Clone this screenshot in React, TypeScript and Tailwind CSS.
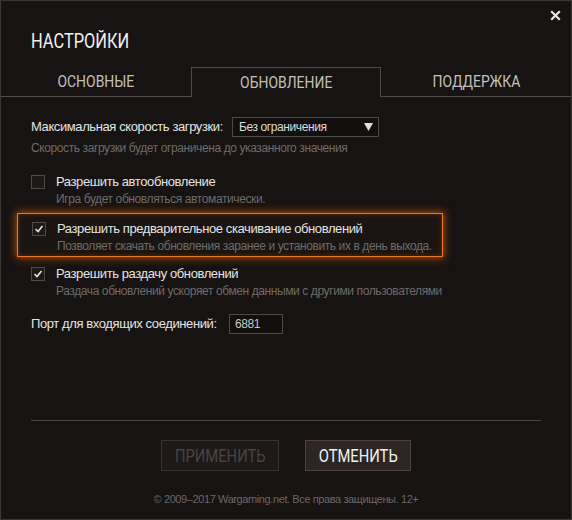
import React from 'react';

function Cond({ children, left }: { children: React.ReactNode; left?: boolean }) {
  return (
    <span
      className={`inline-block scale-x-[0.82] ${left ? 'origin-left' : 'origin-center'}`}
      style={{ fontFamily: 'Roboto, "Liberation Sans", sans-serif' }}
    >
      {children}
    </span>
  );
}

function Check({ checked }: { checked: boolean }) {
  return (
    <div className="w-[14px] h-[14px] shrink-0 border border-[#4d4a48] bg-[#1c1918] flex items-center justify-center">
      {checked && (
        <svg width="10" height="10" viewBox="0 0 10 10">
          <polyline points="1.5,5 4,7.5 8.5,2" fill="none" stroke="#e6e6e6" strokeWidth="1.6" />
        </svg>
      )}
    </div>
  );
}

function Option({ checked, label, hint }: { checked: boolean; label: string; hint: string }) {
  return (
    <div className="whitespace-nowrap">
      <div className="flex items-center h-[16px]">
        <Check checked={checked} />
        <span className="ml-[11px] text-[13px] text-[#e4e4e4] leading-[16px]">{label}</span>
      </div>
      <div className="pl-[25px] mt-[1px] text-[12px] leading-[16px] text-[#6f6b69]">{hint}</div>
    </div>
  );
}

export default function App() {
  return (
    <div
      className="relative w-[572px] h-[520px] border border-[#3a3634] bg-[#171312] overflow-hidden tracking-[-0.4px]"
      style={{ fontFamily: '"Liberation Sans", Arial, sans-serif' }}
    >
      <div className="absolute top-[9px] right-[10px]">
        <svg width="11" height="11" viewBox="0 0 11 11">
          <path d="M1.2 1.2 L9.8 9.8 M9.8 1.2 L1.2 9.8" stroke="#e8e8e8" strokeWidth="2.2" />
        </svg>
      </div>

      <div className="pt-[28px] pl-[30px] text-[20px] leading-[24px] text-[#f0f0f0] tracking-normal">
        <Cond left>НАСТРОЙКИ</Cond>
      </div>

      <div className="mt-[14px] grid grid-cols-3 h-[30px] text-[17px] text-[#c4c0bd] tracking-normal">
        <div className="flex items-center justify-center border-b border-[#4f4b48]">
          <Cond>ОСНОВНЫЕ</Cond>
        </div>
        <div className="flex items-center justify-center border border-b-0 border-[#4f4b48]">
          <Cond>ОБНОВЛЕНИЕ</Cond>
        </div>
        <div className="flex items-center justify-center border-b border-[#4f4b48]">
          <Cond>ПОДДЕРЖКА</Cond>
        </div>
      </div>

      <div className="px-[30px] pt-[20px]">
        <div className="flex items-center h-[20px] whitespace-nowrap">
          <span className="text-[13px] text-[#e4e4e4] w-[201px]">Максимальная скорость загрузки:</span>
          <div className="w-[147px] h-[20px] border border-[#4d4a48] bg-[#120f0e] flex items-center justify-between pl-[6px] pr-[5px]">
            <span className="text-[12px] text-[#dcdcdc]">Без ограничения</span>
            <svg width="9" height="8" viewBox="0 0 9 8">
              <polygon points="0,0 9,0 4.5,8" fill="#e0e0e0" />
            </svg>
          </div>
        </div>
        <div className="mt-[3px] text-[12px] leading-[16px] text-[#6f6b69]">
          Скорость загрузки будет ограничена до указанного значения
        </div>

        <div className="mt-[18px]">
          <Option checked={false} label="Разрешить автообновление" hint="Игра будет обновляться автоматически." />
        </div>

        <div className="mt-[6px] -ml-[14px] w-[426px] h-[44px] border border-[#f07a1a] bg-[#1a1412] shadow-[0_0_8px_1px_rgba(255,110,10,0.65),inset_0_0_5px_rgba(255,110,10,0.3)] pl-[14px] pt-[7px]">
          <Option
            checked={true}
            label="Разрешить предварительное скачивание обновлений"
            hint="Позволяет скачать обновления заранее и установить их в день выхода."
          />
        </div>

        <div className="mt-[9px]">
          <Option
            checked={true}
            label="Разрешить раздачу обновлений"
            hint="Раздача обновлений ускоряет обмен данными с другими пользователями"
          />
        </div>

        <div className="mt-[15px] flex items-center h-[20px] whitespace-nowrap">
          <span className="text-[13px] text-[#e4e4e4] w-[198px]">Порт для входящих соединений:</span>
          <div className="w-[54px] h-[20px] border border-[#4d4a48] bg-[#120f0e] flex items-center pl-[5px] text-[12px] text-[#c8c8c8]">
            6881
          </div>
        </div>
      </div>

      <div className="mx-[30px] mt-[86px] h-px bg-[#4a4543]" />

      <div className="mt-[19px] flex justify-center gap-[26px] tracking-normal">
        <div className="w-[118px] h-[31px] border border-[#3a3432] bg-[#1e1918] flex items-center justify-center text-[18px] text-[#4a4442]">
          <Cond>ПРИМЕНИТЬ</Cond>
        </div>
        <div className="w-[106px] h-[31px] border border-[#4d4542] bg-[#2c2523] flex items-center justify-center text-[18px] text-[#f2f2f2]">
          <Cond>ОТМЕНИТЬ</Cond>
        </div>
      </div>

      <div className="mt-[20px] text-center text-[11px] text-[#6d6866]">
        © 2009–2017 Wargaming.net. Все права защищены. 12+
      </div>
    </div>
  );
}
